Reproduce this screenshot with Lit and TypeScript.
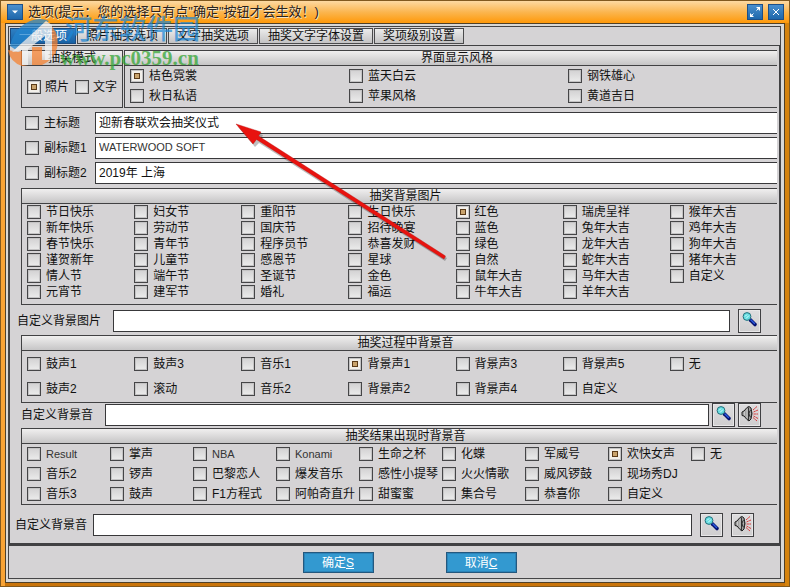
import { LitElement, html, css, svg, nothing } from "lit";
import { customElement, property } from "lit/decorators.js";
import { classMap } from "lit/directives/class-map.js";

const STYLES = ["桔色霓裳", "秋日私语", "蓝天白云", "苹果风格", "钢铁雄心", "黄道吉日"];

const PICTURES = [
  "节日快乐", "新年快乐", "春节快乐", "谨贺新年", "情人节", "元宵节",
  "妇女节", "劳动节", "青年节", "儿童节", "端午节", "建军节",
  "重阳节", "国庆节", "程序员节", "感恩节", "圣诞节", "婚礼",
  "生日快乐", "招待晚宴", "恭喜发财", "星球", "金色", "福运",
  "红色", "蓝色", "绿色", "自然", "鼠年大吉", "牛年大吉",
  "瑞虎呈祥", "兔年大吉", "龙年大吉", "蛇年大吉", "马年大吉", "羊年大吉",
  "猴年大吉", "鸡年大吉", "狗年大吉", "猪年大吉", "自定义",
];

const DRAW_SOUNDS = [
  "鼓声1", "鼓声2", "鼓声3", "滚动", "音乐1", "音乐2", "背景声1", "背景声2",
  "背景声3", "背景声4", "背景声5", "自定义", "无",
];

const RESULT_SOUNDS = [
  "Result", "音乐2", "音乐3", "掌声", "锣声", "鼓声", "NBA", "巴黎恋人", "F1方程式",
  "Konami", "爆发音乐", "阿帕奇直升", "生命之杯", "感性小提琴", "甜蜜蜜",
  "化蝶", "火火情歌", "集合号", "军威号", "威风锣鼓", "恭喜你",
  "欢快女声", "现场秀DJ", "自定义", "无",
];

const TABS = ["一般选项", "照片抽奖选项", "文字抽奖选项", "抽奖文字字体设置", "奖项级别设置"];

const TITLES = [
  { label: "主标题", value: "迎新春联欢会抽奖仪式" },
  { label: "副标题1", value: "WATERWOOD SOFT" },
  { label: "副标题2", value: "2019年 上海" },
];

const tick = css`
  * {
    box-sizing: border-box;
  }
  .tick {
    appearance: none;
    flex: none;
    display: grid;
    place-items: center;
    width: 14px;
    height: 14px;
    margin: 0;
    border: 1px solid #454547;
    background: linear-gradient(#d2d1d2, #ececec);
    box-shadow: inset 0 0 0 1px #c4c3c4;
  }
  .tick:checked {
    background: #f2efea;
  }
  .tick:checked::after {
    content: "";
    box-sizing: border-box;
    width: 6px;
    height: 6px;
    border: 1px solid #5a3a18;
    background: #c9a36c;
  }
`;

/** A framed group of mutually exclusive choices, filled column by column. */
@customElement("choice-group")
class ChoiceGroup extends LitElement {
  @property() heading = "";
  @property() kind = "";
  @property() selected = "";
  @property({ attribute: false }) items: string[] = [];

  static styles = [
    tick,
    css`
      :host {
        display: block;
        min-width: 0;
      }
      .group {
        min-width: 0;
        height: 100%;
        border: 1px solid #414143;
        border-width: 0 0 1px 1px;
      }
      .group.mode {
        border-right-width: 1px;
      }
      .heading {
        height: 16px;
        padding-left: 12px;
        border: 1px solid #414143;
        border-width: 1px 0;
        background: linear-gradient(#f0efef, #c6c5c6);
        text-align: center;
        line-height: 15px;
      }
      .mode .heading {
        padding: 0;
      }
      .items {
        display: grid;
        grid-auto-flow: column;
        grid-auto-columns: minmax(0, 1fr);
        padding-left: 5px;
      }
      .mode .items {
        grid-template-rows: 40px;
        grid-auto-columns: 48px;
        padding-top: 1px;
      }
      .style .items {
        grid-template-rows: repeat(2, 20px);
        grid-auto-columns: 219px;
        padding-bottom: 1px;
      }
      .picture .items {
        grid-template-rows: repeat(6, 16px);
        padding-bottom: 4px;
      }
      .draw .items {
        grid-template-rows: repeat(2, 25px);
        padding-bottom: 1px;
      }
      .result .items {
        grid-template-rows: repeat(3, 20px);
        padding-right: 3px;
      }
      .choice {
        display: flex;
        align-items: center;
        gap: 5px;
        white-space: nowrap;
      }
      .mode .choice {
        gap: 4px;
      }
      .latin {
        font-size: 11px;
        color: #333;
      }
    `,
  ];

  render() {
    return html`
      <div class="group ${this.kind}" role="radiogroup" aria-labelledby="heading">
        <div class="heading" id="heading">${this.heading}</div>
        <div class="items">
          ${this.items.map(
            (item) => html`
              <label class="choice">
                <input class="tick" type="radio" name=${this.kind} .checked=${item === this.selected} />
                <span class=${classMap({ latin: /^[A-Za-z]+$/.test(item) })}>${item}</span>
              </label>
            `,
          )}
        </div>
      </div>
    `;
  }
}

const magnifier = svg`
  <svg viewBox="0 0 16 16" width="16" height="16" aria-hidden="true">
    <path d="M8.500 8 L13 12.500" stroke="#04106e" stroke-width="3.600" stroke-linecap="round"/>
    <path d="M9 8 L12.500 11.500" stroke="#2c5be0" stroke-width="1.400" stroke-linecap="round"/>
    <circle cx="5" cy="4.500" r="3.900" fill="#62dce0" stroke="#28707c"/>
    <path d="M3 4.500 L5 2.500 M4 6.500 L7 3.500" stroke="#d8ffff" stroke-width="1"/>
  </svg>`;

const speaker = svg`
  <svg viewBox="0 0 18 18" width="18" height="18" aria-hidden="true">
    <path d="M1 7 L3 6 L6 2.500 L8 1.500 L10 3 L11 8.500 L10 14 L8 16 L6 14.500 L3 11 L1 10.500 Z" fill="#a0a0a0" stroke="#1c1c1c"/>
    <path d="M3.500 6.500 V10.500 M6 4 V13" stroke="#c8c8c8"/>
    <path d="M7.500 2.500 V15" stroke="#333"/>
    <ellipse cx="9.300" cy="8.700" rx="1.200" ry="3.200" fill="#b8b8b8" stroke="#222"/>
    <path d="M12 5 L16 1.500 M12.500 7 L17 5 M12.500 9 H17 M12.500 11 L17 13.500 M12 12.500 L16 16" stroke="#d83c3c" stroke-dasharray="2.400 .500"/>
  </svg>`;

/** A path box followed by its browse button and, for sounds, a preview button. */
@customElement("file-row")
class FileRow extends LitElement {
  @property() label = "";
  @property({ type: Boolean }) sound = false;

  static styles = css`
    * {
      box-sizing: border-box;
    }
    :host {
      display: flex;
      align-items: center;
    }
    .label {
      margin-right: var(--label-gap, 12px);
      white-space: nowrap;
    }
    .path {
      flex: 1;
      min-width: 0;
      height: 22px;
      border: 1px solid #38383a;
      border-radius: 0;
      background: #fff;
      font: inherit;
    }
    .icon {
      display: grid;
      place-items: center;
      width: 23px;
      height: 24px;
      margin: 0 0 0 var(--button-gap, 8px);
      padding: 0 0 2px;
      border: 1px solid #404043;
      background: linear-gradient(#dedddf, #cfcecf);
      box-shadow: inset 0 0 0 1px #e8e7e8;
    }
  `;

  render() {
    return html`
      <label class="label" for="path">${this.label}</label>
      <input class="path" id="path" type="text" />
      <button class="icon" type="button" aria-label="浏览">${magnifier}</button>
      ${this.sound ? html`<button class="icon" type="button" aria-label="试听">${speaker}</button>` : nothing}
    `;
  }
}

@customElement("app-root")
class AppRoot extends LitElement {
  static styles = [
    tick,
    css`
      :host {
        display: block;
        position: relative;
        min-height: 100vh;
        color: #111;
        font: 12px/14px "Liberation Sans", "Noto Sans CJK SC", sans-serif;
      }
      .window {
        display: flex;
        flex-direction: column;
        min-height: 100vh;
        border: 1px solid #81591f;
        background: linear-gradient(90deg, #f8a335 50%, #d5830d 50%);
      }
      .titlebar {
        display: flex;
        align-items: center;
        gap: 5px;
        height: 22px;
        padding: 0 5px 0 6px;
        background: linear-gradient(#fdd9a2, #fbb650 50%, #ff9909);
      }
      .caption {
        flex: 1;
        margin: 0;
        color: #29231d;
        font-size: 13px;
        font-weight: 400;
        text-shadow: 1px 1px 0 #f6e4c6;
        white-space: nowrap;
      }
      .sys {
        display: grid;
        place-items: center;
        width: 16px;
        height: 16px;
        padding: 0;
        border: 1px solid #1d4f87;
        background: linear-gradient(#4a8fcd, #1e67ab);
      }
      .body {
        flex: 1;
        display: flex;
        margin: 0 4px 3px;
        padding: 2px 3px 3px 2px;
        border: 1px solid #4f4028;
        background: #d9d8d6;
        box-shadow: 0 3px 0 #c9740a;
      }
      .frame {
        flex: 1;
        min-width: 0;
        display: flex;
        flex-direction: column;
        border: 1px solid #454547;
        background: #d5d3d5;
      }
      .tabs {
        display: flex;
        gap: 1px;
        height: 18px;
        padding: 1px;
      }
      .tab {
        height: 16px;
        padding: 0 8px;
        border: 1px solid #4a4a4c;
        background: linear-gradient(#ebebeb, #c4c3c4);
        color: inherit;
        font: inherit;
        line-height: 14px;
        white-space: nowrap;
      }
      .tab.current {
        border-color: #1b4b80;
        background: linear-gradient(#2e80c4, #1861a4);
        color: #fff;
      }
      .panel {
        display: flex;
        flex-direction: column;
        padding: 4px 2px 6px 5px;
        border: 1px solid #414143;
        border-bottom-width: 3px;
      }
      .top {
        display: grid;
        grid-template-columns: 102px minmax(0, 1fr);
        gap: 1px;
        margin-left: 6px;
        overflow: hidden;
      }
      .wide {
        margin-left: 6px;
      }
      .titles {
        display: grid;
        gap: 3px;
        margin: 4px 0;
      }
      .title {
        display: grid;
        grid-template-columns: 14px 46px 1fr;
        align-items: center;
        column-gap: 5px;
        padding-left: 10px;
      }
      .field {
        min-width: 0;
        height: 22px;
        padding: 0 3px 3px;
        border: 1px solid #38383a;
        border-right: 0;
        border-radius: 0;
        background: #fff;
        color: #111;
        font: inherit;
      }
      .field.latin {
        font-size: 11px;
        color: #333;
      }
      .file {
        margin: 4px 16px 2px 2px;
      }
      .file-draw {
        --button-gap: 3px;
        margin: 0 16px 1px 6px;
      }
      .file-result {
        --label-gap: 6px;
        margin: 8px 23px 0 0;
      }
      .actions {
        display: flex;
        justify-content: center;
        gap: 72px;
        padding: 6px 0 5px 30px;
      }
      .action {
        width: 71px;
        height: 21px;
        padding: 0;
        border: 1px solid #24587e;
        background: #3399d0;
        box-shadow: inset 0 0 0 1px #2b84b9;
        color: #fff;
        font: inherit;
      }
      .overlay {
        position: absolute;
        pointer-events: none;
      }
      .arrow {
        left: 230px;
        top: 118px;
      }
      .logo {
        left: 6px;
        top: 16px;
        opacity: 0.75;
      }
      .brand {
        left: 65px;
        top: 15px;
        color: #1c87d6;
        font-size: 27px;
        font-weight: 500;
        line-height: 30px;
        opacity: 0.7;
        white-space: nowrap;
      }
      .site {
        left: 60px;
        top: 48px;
        color: #36a636;
        font: bold 21px/20px "Liberation Serif", serif;
        opacity: 0.75;
      }
    `,
  ];

  render() {
    return html`
      <div class="window">
        <header class="titlebar">
          <button class="sys" type="button" aria-label="窗口菜单">
            <svg width="8" height="8" viewBox="0 0 8 8"><path d="M1 2.500 H7 L4 5.500 Z" fill="#fff" /></svg>
          </button>
          <h1 class="caption">选项(提示：您的选择只有点"确定"按钮才会生效！)</h1>
          <button class="sys" type="button" aria-label="最大化">
            <svg width="12" height="12" viewBox="0 0 12 12">
              <path d="M7 1 H11 V5 Z M1 7 V11 H5 Z" fill="#fff" />
              <path d="M7.500 4.500 L9 3 M3 9 L4.500 7.500" stroke="#fff" />
            </svg>
          </button>
          <button class="sys" type="button" aria-label="关闭">
            <svg width="8" height="8" viewBox="0 0 8 8"><path d="M1 1 L7 7 M7 1 L1 7" stroke="#fff" /></svg>
          </button>
        </header>
        <div class="body">
          <main class="frame">
            <nav class="tabs" role="tablist">
              ${TABS.map(
                (tab, i) => html`<button
                  class=${classMap({ tab: true, current: i === 0 })}
                  type="button"
                  role="tab"
                  aria-selected=${i === 0 ? "true" : "false"}
                >${tab}</button>`,
              )}
            </nav>
            <section class="panel">
              <div class="top">
                <choice-group kind="mode" heading="抽奖模式" .items=${["照片", "文字"]} selected="照片"></choice-group>
                <choice-group kind="style" heading="界面显示风格" .items=${STYLES} selected="桔色霓裳"></choice-group>
              </div>
              <div class="titles">
                ${TITLES.map(
                  (t, i) => html`
                    <div class="title">
                      <input class="tick" type="checkbox" id="show${i}" aria-label=${"显示" + t.label} />
                      <label for="title${i}">${t.label}</label>
                      <input
                        class=${classMap({ field: true, latin: /^[A-Z ]+$/.test(t.value) })}
                        id="title${i}"
                        type="text"
                        .value=${t.value}
                      />
                    </div>
                  `,
                )}
              </div>
              <choice-group class="wide" kind="picture" heading="抽奖背景图片" .items=${PICTURES} selected="红色"></choice-group>
              <file-row class="file" label="自定义背景图片"></file-row>
              <choice-group class="wide" kind="draw" heading="抽奖过程中背景音" .items=${DRAW_SOUNDS} selected="背景声1"></choice-group>
              <file-row class="file-draw" label="自定义背景音" sound></file-row>
              <choice-group class="wide" kind="result" heading="抽奖结果出现时背景音" .items=${RESULT_SOUNDS} selected="欢快女声"></choice-group>
              <file-row class="file-result" label="自定义背景音" sound></file-row>
            </section>
            <footer class="actions">
              <button class="action" type="button">确定<u>S</u></button>
              <button class="action" type="button">取消<u>C</u></button>
            </footer>
          </main>
        </div>
      </div>

      <svg class="overlay logo" width="56" height="52" viewBox="0 0 56 52" aria-hidden="true">
        <path d="M2 34 Q4 46 16 50 L22 49 V33 L12 36 Z" fill="#f58232" />
        <path d="M43 8 Q54 16 51 32 Q48 44 36 49 H26 V31 H36 V44 H43 Z" fill="#f58232" />
        <path d="M4 30 Q8 12 24 5 Q34 1 43 5 L36 10 L10 34 Z" fill="#2385cf" />
        <path d="M6 36 L40 5 L46 9 V44 H39 V20 L22 33 V49 H16 V34 Z" fill="#f3f3f3" />
      </svg>
      <div class="overlay brand">河东软件园</div>
      <div class="overlay site">www.pc0359.cn</div>

      <svg class="overlay arrow" width="224" height="150" viewBox="0 0 224 150" aria-hidden="true">
        <g transform="translate(2 3)" fill="#000" opacity=".25">
          <path d="M6 6 L31 14 L29 18 L215 137 L213 140 L27 22 L23 26 Z" />
        </g>
        <path d="M6 6 L31 14 L28.500 18 L215.500 138 L214 141 L26.500 21.500 L23 26 Z" fill="#e8130f" stroke="#b80c0a" stroke-width=".4" />
      </svg>
    `;
  }
}
